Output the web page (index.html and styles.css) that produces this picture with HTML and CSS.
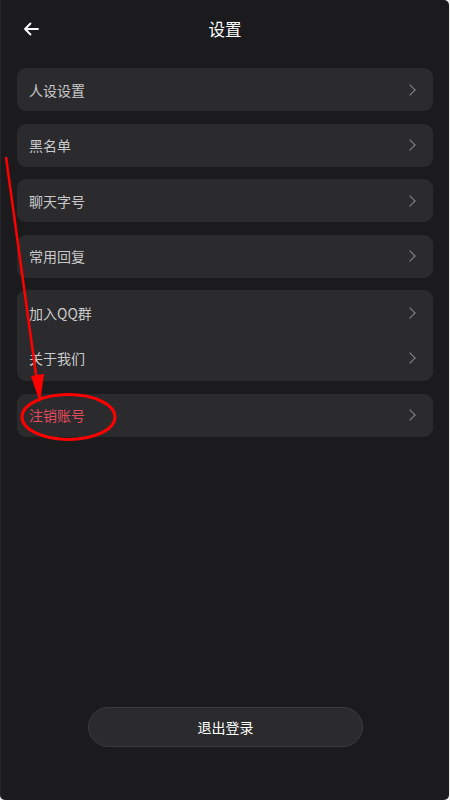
FILE: index.html
```html
<!DOCTYPE html>
<html lang="zh-CN">
<head>
<meta charset="utf-8">
<title>设置</title>
<link rel="stylesheet" href="styles.css">
</head>
<body>
<div class="app">
  <header class="header">
    <span class="back">
      <svg width="16" height="14" viewBox="0 0 16 14"><path d="M15 7H2M7.5 1.5L2 7l5.5 5.5" fill="none" stroke="#fff" stroke-width="1.8" stroke-linecap="round" stroke-linejoin="round"/></svg>
    </span>
    <h1 class="title">设置</h1>
  </header>

  <main class="list">
    <div class="card"><div class="row"><span>人设设置</span><i class="chev"></i></div></div>
    <div class="card"><div class="row"><span>黑名单</span><i class="chev"></i></div></div>
    <div class="card"><div class="row"><span>聊天字号</span><i class="chev"></i></div></div>
    <div class="card"><div class="row"><span>常用回复</span><i class="chev"></i></div></div>
    <div class="card group">
      <div class="row"><span>加入QQ群</span><i class="chev"></i></div>
      <div class="row"><span>关于我们</span><i class="chev"></i></div>
    </div>
    <div class="card"><div class="row danger"><span>注销账号</span><i class="chev"></i></div></div>
  </main>

  <div class="footer">
    <button class="logout">退出登录</button>
  </div>

  <svg class="annot" width="450" height="800" viewBox="0 0 450 800">
    <line x1="6" y1="157" x2="37" y2="382" stroke="#ff0000" stroke-width="2.5"/>
    <polygon points="31,376 44,374 40,403" fill="#ff0000"/>
    <ellipse cx="68.5" cy="417" rx="46.5" ry="22.5" fill="none" stroke="#ff0000" stroke-width="3"/>
  </svg>
</div>
</body>
</html>
```

FILE: styles.css
```css
* { box-sizing: border-box; }
html, body { margin: 0; padding: 0; }
body {
  background: #eeeeee;
  font-family: "Noto Sans CJK SC", "Noto Sans", sans-serif;
}
.app {
  position: relative;
  width: 449px;
  height: 800px;
  background: #1b1b1d;
  border-radius: 0 5px 5px 5px;
  border-left: 1px solid #262628;
  display: flex;
  flex-direction: column;
  overflow: hidden;
}
.header {
  position: relative;
  height: 58px;
  display: flex;
  align-items: center;
  justify-content: center;
}
.back {
  position: absolute;
  left: 22px;
  top: 22px;
  display: flex;
}
.title {
  margin: 0;
  font-size: 16.5px;
  font-weight: 400;
  color: #ffffff;
  line-height: 1;
}
.list {
  margin-top: 10px;
  padding: 0 16px 0 16px;
  display: flex;
  flex-direction: column;
  gap: 12.5px;
}
.card {
  background: #2b2b2d;
  border-radius: 9px;
}
.row {
  height: 43px;
  padding: 0 17px 0 12px;
  display: flex;
  align-items: center;
  justify-content: space-between;
  font-size: 14px;
  color: #c9c9cb;
}
.group .row { height: 45.5px; }
.danger { color: #e24a5d; }
.chev {
  width: 8px;
  height: 8px;
  border-right: 1.4px solid #8a8a8c;
  border-top: 1.4px solid #8a8a8c;
  transform: rotate(45deg);
  margin-right: 2px;
}
.footer {
  margin-top: auto;
  margin-bottom: 53px;
  display: flex;
  justify-content: center;
}
.logout {
  width: 275px;
  height: 40px;
  border-radius: 20px;
  background: #2b2b2d;
  border: 1px solid #3a3a3c;
  color: #ffffff;
  font-family: "Noto Sans CJK SC", "Noto Sans", sans-serif;
  font-size: 14px;
  margin-left: 1px;
}
.annot {
  position: absolute;
  left: -1px;
  top: 0;
  pointer-events: none;
}
```
